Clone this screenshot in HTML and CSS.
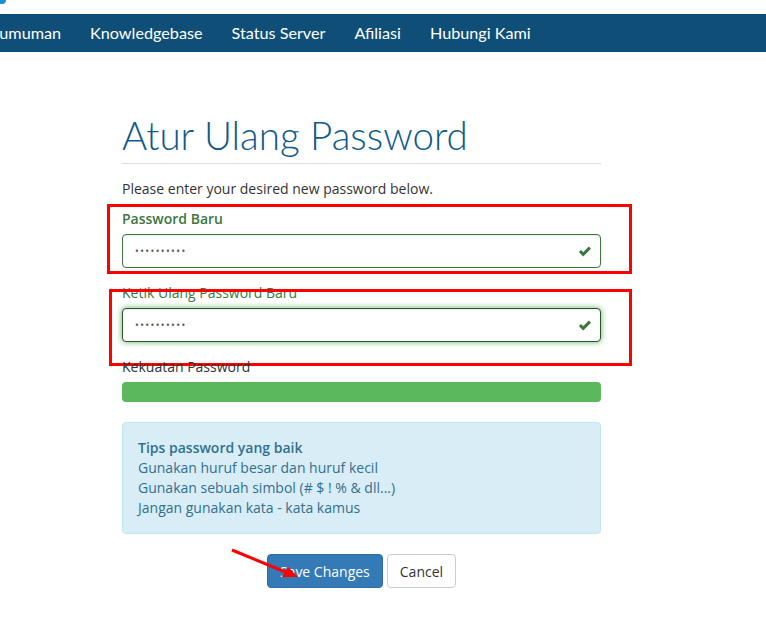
FILE: index.html
```html
<!DOCTYPE html>
<html lang="id">
<head>
  <meta charset="UTF-8" />
  <title>Atur Ulang Password</title>
  <link rel="stylesheet" href="styles.css">
</head>
<body>
  <header class="top">
    <span class="logo-bit"></span>
  </header>

  <nav class="main-nav">
    <ul>
      <li><a href="#">Pengumuman</a></li>
      <li><a href="#">Knowledgebase</a></li>
      <li><a href="#">Status Server</a></li>
      <li><a href="#">Afiliasi</a></li>
      <li><a href="#">Hubungi Kami</a></li>
    </ul>
  </nav>

  <main class="content">
    <h1>Atur Ulang Password</h1>
    <p class="intro">Please enter your desired new password below.</p>

    <form class="reset-form">
      <div class="form-group has-success">
        <label for="newpw">Password Baru</label>
        <div class="input-wrap">
          <input type="password" id="newpw" value="abcdefghij">
          <svg class="ok-icon" viewBox="0 0 16 16"><path d="M2 8.6 L4.3 6.4 L6.6 8.7 L12.6 2.7 L14.9 5 L6.6 13.3 Z"/></svg>
        </div>
        <span class="annot annot-1"></span>
      </div>

      <div class="form-group has-success">
        <label for="confirmpw" class="light">Ketik Ulang Password Baru</label>
        <div class="input-wrap">
          <input type="password" id="confirmpw" class="focused" value="abcdefghij">
          <svg class="ok-icon" viewBox="0 0 16 16"><path d="M2 8.6 L4.3 6.4 L6.6 8.7 L12.6 2.7 L14.9 5 L6.6 13.3 Z"/></svg>
        </div>
        <span class="annot annot-2"></span>
      </div>

      <div class="form-group">
        <label class="light">Kekuatan Password</label>
        <div class="progress"><div class="progress-bar" style="width: 100%"></div></div>
      </div>

      <div class="alert-info">
        <strong>Tips password yang baik</strong><br>
        Gunakan huruf besar dan huruf kecil<br>
        Gunakan sebuah simbol (# $ ! % &amp; dll...)<br>
        Jangan gunakan kata - kata kamus
      </div>

      <div class="actions">
        <button type="button" class="btn btn-primary">Save Changes</button>
        <button type="reset" class="btn btn-default">Cancel</button>
        <svg class="arrow" viewBox="0 0 80 40" width="80" height="40">
          <line x1="4" y1="4" x2="60" y2="27" stroke="#f00" stroke-width="3"/>
          <path d="M70 31 L54 31 L60 21 Z" fill="#f00"/>
        </svg>
      </div>
    </form>
  </main>
</body>
</html>
```

FILE: styles.css
```css
html, body {
  margin: 0;
  padding: 0;
  background: white;
  font-family: "Open Sans", Arial, sans-serif;
  font-size: 14px;
  color: #333;
}

.top {
  height: 14px;
  position: relative;
}
.logo-bit {
  position: absolute;
  top: 0;
  left: 0;
  width: 6px;
  height: 4px;
  background: #1a8fd6;
  border-radius: 0 0 4px 0;
}

.main-nav {
  background: #0f4f77;
  height: 38px;
  overflow: hidden;
}
.main-nav ul {
  list-style: none;
  margin: 0 0 0 -36px;
  padding: 0;
  display: flex;
  gap: 29px;
}
.main-nav a {
  display: block;
  line-height: 38px;
  color: white;
  text-decoration: none;
  font-family: Lato, "Open Sans", sans-serif;
  font-size: 16.2px;
}

.content {
  width: 479px;
  margin: 0 0 0 122px;
  padding-top: 62px;
}

h1 {
  font-family: Lato, "Open Sans", sans-serif;
  font-weight: 300;
  font-size: 38.6px;
  color: #0e5a8a;
  margin: 0;
  padding-bottom: 7px;
  border-bottom: 1px solid #ddd;
  line-height: 42px;
}

.intro {
  margin: 15px 0 10px;
  line-height: 20px;
}

.form-group {
  position: relative;
  margin-bottom: 15px;
}
.form-group label {
  display: block;
  font-weight: 600;
  font-size: 14px;
  margin-bottom: 5px;
  line-height: 20px;
}
.form-group label.light {
  font-weight: 400;
}
.has-success label {
  color: #3c763d;
}

.input-wrap {
  position: relative;
}
.input-wrap input {
  display: block;
  box-sizing: border-box;
  width: 100%;
  height: 34px;
  padding: 6px 12px;
  font-family: "Open Sans", Arial, sans-serif;
  font-size: 10px;
  letter-spacing: 1.4px;
  color: #555;
  border: 1px solid #3c763d;
  border-radius: 4px;
  box-shadow: inset 0 1px 1px rgba(0,0,0,.075);
  outline: none;
}
.input-wrap input.focused {
  border-color: #2b542c;
  box-shadow: inset 0 1px 1px rgba(0,0,0,.075), 0 0 6px #67b168;
}
.ok-icon {
  position: absolute;
  right: 9px;
  top: 10px;
  width: 15px;
  height: 15px;
  fill: #3c763d;
}

.annot {
  position: absolute;
  border: 3px solid #f00;
  pointer-events: none;
}
.annot-1 {
  left: -15px;
  top: -5px;
  width: 519px;
  height: 64px;
}
.annot-2 {
  left: -13px;
  top: 6px;
  width: 517px;
  height: 71px;
}

.progress {
  height: 20px;
  background: #f5f5f5;
  border-radius: 4px;
  overflow: hidden;
}
.progress-bar {
  height: 100%;
  background: #5cb85c;
}

.alert-info {
  background: #d9edf7;
  border: 1px solid #bce8f1;
  color: #31708f;
  border-radius: 4px;
  padding: 15px;
  line-height: 20px;
  margin: 20px 0;
}
.alert-info strong {
  font-weight: 600;
}

.actions {
  position: relative;
  display: flex;
  justify-content: center;
  gap: 4px;
}
.btn {
  font-family: "Open Sans", Arial, sans-serif;
  font-size: 14px;
  height: 34px;
  padding: 6px 12px;
  border-radius: 4px;
  border: 1px solid transparent;
  cursor: pointer;
}
.btn-primary {
  background: #337ab7;
  border-color: #2e6da4;
  color: white;
}
.btn-default {
  background: white;
  border-color: #ccc;
  color: #333;
}
.arrow {
  position: absolute;
  left: 106px;
  top: -8px;
}
```
